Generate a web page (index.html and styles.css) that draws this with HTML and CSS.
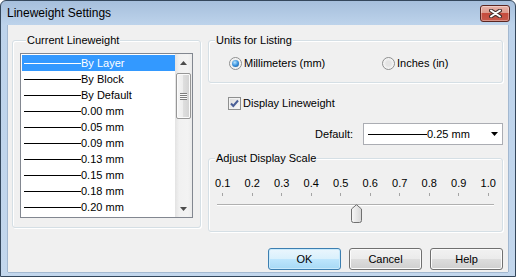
FILE: index.html
```html
<!DOCTYPE html>
<html lang="en">
<head>
  <meta charset="UTF-8" />
  <title>Lineweight Settings</title>
  <link rel="stylesheet" href="styles.css">
</head>
<body>
  <div class="window">
    <div class="titlebar">
      <span class="title">Lineweight Settings</span>
      <button class="close-btn" aria-label="Close">
        <svg width="13" height="9" viewBox="0 0 13 9">
          <path d="M2 1.5 L11 7.5 M11 1.5 L2 7.5" stroke="#43302d" stroke-width="4" stroke-linecap="round"/>
          <path d="M2 1.5 L11 7.5 M11 1.5 L2 7.5" stroke="#fff" stroke-width="2" stroke-linecap="round"/>
        </svg>
      </button>
    </div>

    <div class="client">
      <div class="main">
        <fieldset class="group group-list">
          <legend>Current Lineweight</legend>
          <div class="listbox">
            <ul class="lw-list">
              <li class="lw-item selected"><span class="lw-line"></span>By Layer</li>
              <li class="lw-item"><span class="lw-line"></span>By Block</li>
              <li class="lw-item"><span class="lw-line"></span>By Default</li>
              <li class="lw-item"><span class="lw-line"></span>0.00 mm</li>
              <li class="lw-item"><span class="lw-line"></span>0.05 mm</li>
              <li class="lw-item"><span class="lw-line"></span>0.09 mm</li>
              <li class="lw-item"><span class="lw-line"></span>0.13 mm</li>
              <li class="lw-item"><span class="lw-line"></span>0.15 mm</li>
              <li class="lw-item"><span class="lw-line"></span>0.18 mm</li>
              <li class="lw-item"><span class="lw-line"></span>0.20 mm</li>
            </ul>
            <div class="scrollbar">
              <div class="sb-arrow">
                <svg width="7" height="4" viewBox="0 0 7 4"><polygon points="0,4 3.5,0 7,4" fill="#4d4d4d"/></svg>
              </div>
              <div class="sb-thumb"><span class="sb-grip"></span></div>
              <div class="sb-track"></div>
              <div class="sb-arrow">
                <svg width="7" height="4" viewBox="0 0 7 4"><polygon points="0,0 7,0 3.5,4" fill="#4d4d4d"/></svg>
              </div>
            </div>
          </div>
        </fieldset>

        <div class="side">
          <fieldset class="group">
            <legend>Units for Listing</legend>
            <div class="units-row">
              <label class="radio-label"><span class="radio checked"></span>Millimeters (mm)</label>
              <label class="radio-label"><span class="radio"></span>Inches (in)</label>
            </div>
          </fieldset>

          <label class="check-row">
            <span class="checkbox">
              <svg width="11" height="11" viewBox="0 0 11 11"><path d="M2 5.5 L4.3 8 L9 2.5" fill="none" stroke="#4a5f97" stroke-width="2"/></svg>
            </span>
            Display Lineweight
          </label>

          <div class="default-row">
            <span>Default:</span>
            <div class="combo">
              <span class="lw-line"></span>0.25 mm
              <svg class="combo-arrow" width="7" height="4" viewBox="0 0 7 4"><polygon points="0,0 7,0 3.5,4" fill="#000"/></svg>
            </div>
          </div>

          <fieldset class="group group-scale">
            <legend>Adjust Display Scale</legend>
            <div class="scale-labels">
              <span>0.1</span><span>0.2</span><span>0.3</span><span>0.4</span><span>0.5</span>
              <span>0.6</span><span>0.7</span><span>0.8</span><span>0.9</span><span>1.0</span>
            </div>
            <div class="scale-ticks">
              <span></span><span></span><span></span><span></span><span></span>
              <span></span><span></span><span></span><span></span><span></span>
            </div>
            <div class="slider">
              <svg class="slider-thumb" style="left: 48.4%" width="11" height="19" viewBox="0 0 11 19">
                <defs>
                  <linearGradient id="thumbFill" x1="0" y1="0" x2="1" y2="0">
                    <stop offset="0" stop-color="#f7f7f7"/>
                    <stop offset="1" stop-color="#d6d6d6"/>
                  </linearGradient>
                </defs>
                <path d="M0.5 5 L5.5 0.7 L10.5 5 V16.5 Q10.5 18.5 8.5 18.5 H2.5 Q0.5 18.5 0.5 16.5 Z" fill="url(#thumbFill)" stroke="#707070"/>
              </svg>
            </div>
          </fieldset>
        </div>
      </div>

      <div class="buttons">
        <button class="btn btn-default">OK</button>
        <button class="btn">Cancel</button>
        <button class="btn">Help</button>
      </div>
    </div>
  </div>
</body>
</html>
```

FILE: styles.css
```css
* {
  margin: 0;
  padding: 0;
  box-sizing: border-box;
}

body {
  background: #fff;
  color: #000;
  font-family: "Liberation Sans", Arial, sans-serif;
  font-size: 11px;
}

.window {
  width: 516px;
  height: 277px;
  display: flex;
  flex-direction: column;
  padding: 0 7px 4px;
  background: linear-gradient(#a6bfdc, #bdd3eb 24px, #c3d7ed);
  border: 1px solid #34475c;
  border-radius: 6px 6px 0 0;
}

.titlebar {
  height: 24px;
  margin: 0 -7px;
  padding-left: 6px;
  display: flex;
  justify-content: space-between;
  align-items: flex-start;
}

.title {
  font-size: 12px;
  line-height: 24px;
}

.close-btn {
  width: 30px;
  height: 17px;
  margin: 4px 5px 0 0;
  border: 1px solid #5b2621;
  border-radius: 3px;
  background: linear-gradient(#e9b3a9, #dc9a8c 45%, #c64c3d 50%, #c65a4b);
  box-shadow: inset 0 0 0 1px rgba(255, 255, 255, 0.35);
  display: flex;
  align-items: center;
  justify-content: center;
}

.client {
  flex: 1;
  background: #f0f0f0;
  padding: 8px 5px 0 4px;
  box-shadow: -1px 0 0 #a3b8d0, 1px 0 0 #a3b8d0, 0 1px 0 #a3b8d0;
}

.main {
  display: flex;
  align-items: flex-start;
  gap: 7px;
}

.group {
  border: 1px solid #d5dfe5;
  border-radius: 3px;
  box-shadow: inset 1px 1px 0 #fff, 1px 1px 0 #fff;
  min-width: 0;
}

.group legend {
  margin-left: 6px;
  padding: 0 1px;
  line-height: 14px;
  background: #f0f0f0;
}

.group-list {
  width: 189px;
  padding: 6px 7px 9px;
}

.listbox {
  height: 165px;
  display: flex;
  background: #fff;
  border: 1px solid #828790;
}

.lw-list {
  flex: 1;
  list-style: none;
  padding: 1px 0 0 1px;
  overflow: hidden;
}

.lw-item {
  height: 16px;
  display: flex;
  align-items: center;
  padding-left: 2px;
  white-space: nowrap;
}

.lw-item.selected {
  background: #3399ff;
  color: #fff;
}

.lw-line {
  width: 57px;
  height: 1px;
  background: currentColor;
  flex-shrink: 0;
}

.scrollbar {
  width: 17px;
  display: flex;
  flex-direction: column;
  align-items: center;
  background: linear-gradient(to right, #e3e3e3, #f1f1f1 25%, #f3f3f3 75%, #ebebeb);
}

.sb-arrow {
  width: 17px;
  height: 17px;
  display: flex;
  align-items: center;
  justify-content: center;
}

.sb-thumb {
  width: 15px;
  height: 46px;
  margin-top: 2px;
  border: 1px solid #979797;
  border-radius: 2px;
  background: linear-gradient(to right, #f6f6f6, #ececec 50%, #dedede 50%, #d2d2d2);
  box-shadow: inset 0 0 0 1px #fbfbfb;
  display: flex;
  align-items: center;
  justify-content: center;
}

.sb-grip {
  width: 7px;
  height: 7px;
  background: repeating-linear-gradient(#7e7e7e 0 1px, #fafafa 1px 2px);
}

.sb-track {
  flex: 1;
}

.side {
  width: 295px;
  display: flex;
  flex-direction: column;
}

.units-row {
  display: flex;
  padding: 9px 0 11px 20px;
}

.radio-label {
  display: flex;
  align-items: center;
  gap: 2px;
  line-height: 15px;
}

.radio-label:first-child {
  width: 153px;
}

.radio {
  width: 13px;
  height: 13px;
  border: 1px solid #8e8f8f;
  border-radius: 50%;
  background: radial-gradient(circle, #e4e4e4 30%, #f7f7f7 70%);
  display: flex;
  align-items: center;
  justify-content: center;
}

.radio.checked::after {
  content: "";
  width: 7px;
  height: 7px;
  border-radius: 50%;
  background: radial-gradient(circle at 40% 35%, #b9e6ff, #3a92dd 50%, #164f8b);
}

.check-row {
  display: flex;
  align-items: center;
  gap: 2px;
  margin-top: 13px;
  padding-left: 20px;
  line-height: 15px;
}

.checkbox {
  width: 13px;
  height: 13px;
  border: 1px solid #8e8f8f;
  background: linear-gradient(135deg, #dadada, #fbfbfb);
  box-shadow: inset 0 0 0 1px #f2f2f2;
  display: flex;
  align-items: center;
  justify-content: center;
}

.default-row {
  display: flex;
  justify-content: flex-end;
  align-items: center;
  gap: 10px;
  margin-top: 12px;
}

.combo {
  width: 140px;
  height: 22px;
  display: flex;
  align-items: center;
  padding: 0 4px;
  background: #fff;
  border: 1px solid #abadb3;
}

.combo .lw-line {
  width: 59px;
}

.combo-arrow {
  margin-left: auto;
}

.group-scale {
  margin-top: 6px;
  padding: 0 0 8px;
}

.scale-labels {
  display: grid;
  grid-template-columns: repeat(10, 1fr);
  margin: 11px -1px 0;
  line-height: 15px;
  text-align: center;
}

.scale-ticks {
  display: grid;
  grid-template-columns: repeat(10, 1fr);
  justify-items: center;
  margin: 2px -1px 0;
}

.scale-ticks span {
  width: 1px;
  height: 3px;
  background: #a4a4a4;
}

.slider {
  position: relative;
  height: 19px;
  margin: 3px 8px 0;
}

.slider::before {
  content: "";
  display: block;
  height: 1px;
  margin-top: 8px;
  background: #b0b0b0;
  box-shadow: 0 1px 0 #fff;
}

.slider-thumb {
  position: absolute;
  top: 0;
}

.buttons {
  display: flex;
  justify-content: flex-end;
  gap: 8px;
  margin-top: 16px;
}

.btn {
  width: 73px;
  height: 22px;
  font-family: "Liberation Sans", Arial, sans-serif;
  font-size: 11px;
  color: #000;
  border: 1px solid #707070;
  border-radius: 3px;
  background: linear-gradient(#f2f2f2, #ebebeb 50%, #dddddd 50%, #cfcfcf);
  box-shadow: inset 0 0 0 1px #fbfbfb;
}

.btn-default {
  border-color: #3c7fb1;
  background: linear-gradient(#eaf6fd, #d9f0fc 50%, #bee6fd 50%, #a7d9f5);
  box-shadow: inset 0 0 0 1px #c9eafc;
}
```
